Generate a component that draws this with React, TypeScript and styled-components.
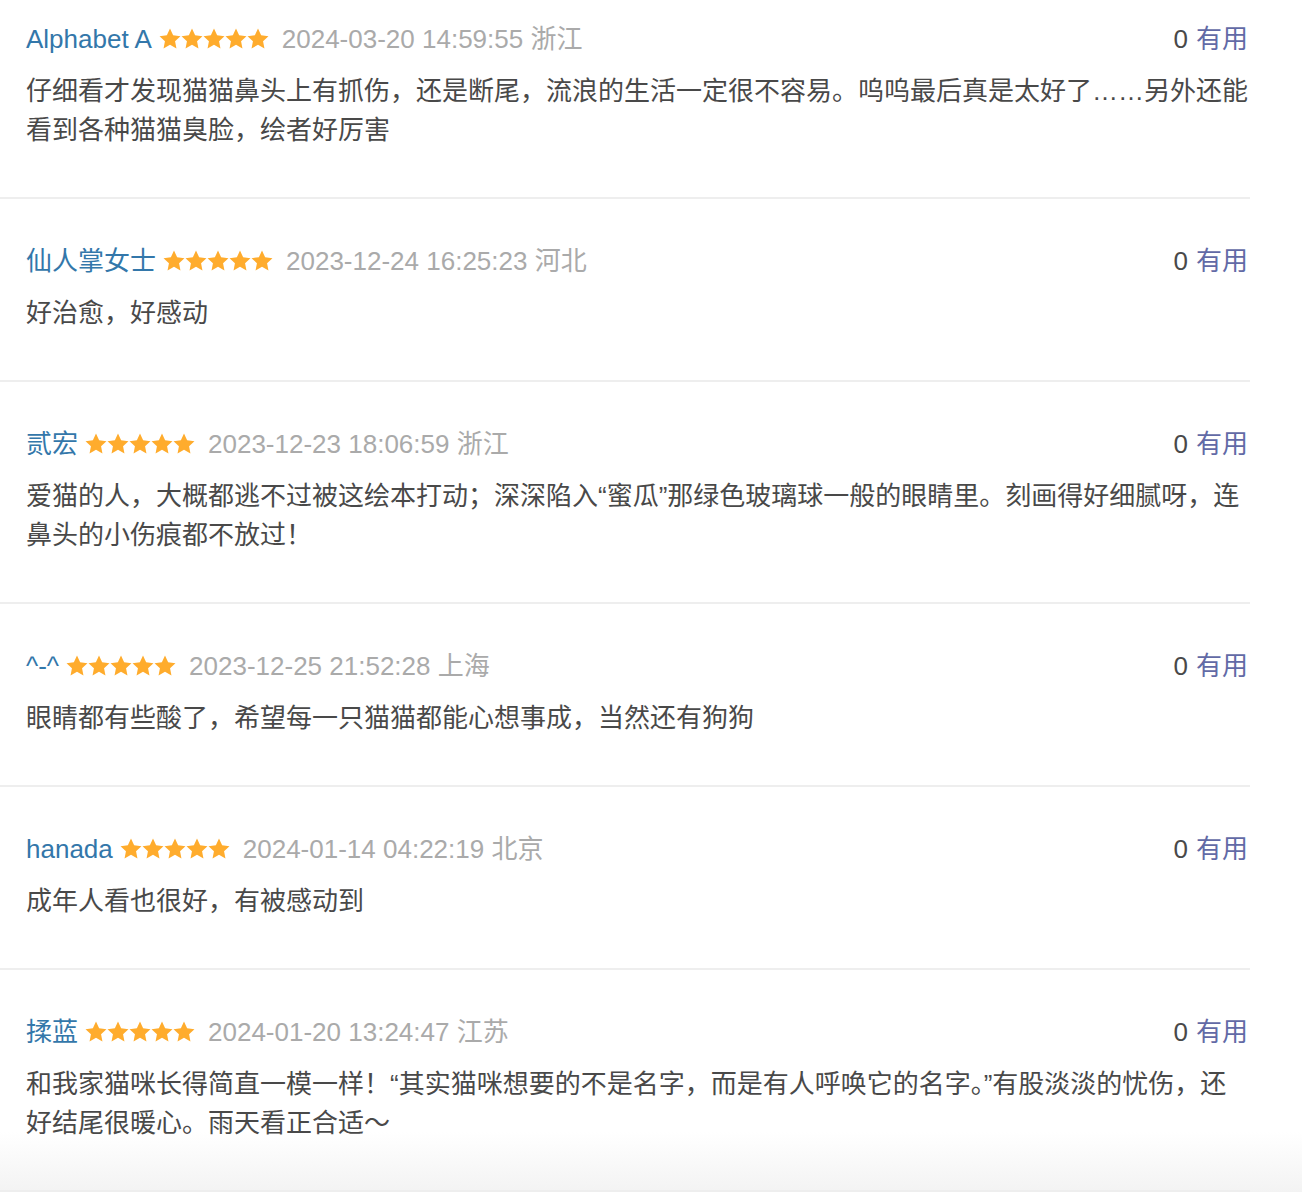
import React from "react";
import styled, { createGlobalStyle } from "styled-components";

const Global = createGlobalStyle`
  html, body { margin: 0; padding: 0; background: #fff; }
  body { font-family: "Liberation Sans", "Noto Sans CJK SC", sans-serif; }
`;

const Page = styled.div`
  position: relative;
  width: 1302px;
  height: 1192px;
  overflow: hidden;
`;

const List = styled.ul`
  position: relative;
  z-index: 1;
  list-style: none;
  margin: 0;
  padding: 0;
  width: 1250px;
`;

const Item = styled.li<{ $first?: boolean }>`
  padding: ${(p) => (p.$first ? "19px" : "42px")} 2px 47px 26px;
  border-bottom: 2px solid #eeeeee;
`;

const Header = styled.div`
  display: flex;
  align-items: center;
  height: 40px;
  font-size: 26px;
  line-height: 40px;
  white-space: nowrap;
`;

const Name = styled.a`
  color: #3377aa;
  text-decoration: none;
`;

const Stars = styled.span`
  display: inline-flex;
  margin-left: 7px;
  margin-right: 13px;
  margin-top: -1px;
`;

const Date = styled.span`
  color: #aaaaaa;
`;

const Spacer = styled.span`
  flex: 1;
`;

const Count = styled.span`
  color: #494949;
`;

const Useful = styled.a`
  color: #626aa6;
  margin-left: 8px;
  text-decoration: none;
`;

const Body = styled.p`
  margin: 13px 0 0;
  font-size: 26px;
  line-height: 39px;
  color: #494949;
`;

const Fade = styled.div`
  position: absolute;
  z-index: 0;
  left: 0;
  right: 0;
  bottom: 0;
  height: 60px;
  pointer-events: none;
  background: linear-gradient(to bottom, rgba(255, 255, 255, 0), rgba(240, 240, 240, 0.8));
`;

const Star = () => (
  <svg width="22" height="22" viewBox="0 0 24 24">
    <path
      d="M12 0.6L15.41 7.91L23.41 8.89L17.52 14.39L19.05 22.31L12 18.4L4.95 22.31L6.48 14.39L0.59 8.89L8.59 7.91Z"
      fill="#ffac2d"
    />
  </svg>
);

type Review = { name: string; date: string; text: string };

const reviews: Review[] = [
  {
    name: "Alphabet A",
    date: "2024-03-20 14:59:55 浙江",
    text: "仔细看才发现猫猫鼻头上有抓伤，还是断尾，流浪的生活一定很不容易。呜呜最后真是太好了……另外还能看到各种猫猫臭脸，绘者好厉害",
  },
  { name: "仙人掌女士", date: "2023-12-24 16:25:23 河北", text: "好治愈，好感动" },
  {
    name: "贰宏",
    date: "2023-12-23 18:06:59 浙江",
    text: "爱猫的人，大概都逃不过被这绘本打动；深深陷入“蜜瓜”那绿色玻璃球一般的眼睛里。刻画得好细腻呀，连鼻头的小伤痕都不放过！",
  },
  {
    name: "^-^",
    date: "2023-12-25 21:52:28 上海",
    text: "眼睛都有些酸了，希望每一只猫猫都能心想事成，当然还有狗狗",
  },
  { name: "hanada", date: "2024-01-14 04:22:19 北京", text: "成年人看也很好，有被感动到" },
  {
    name: "揉蓝",
    date: "2024-01-20 13:24:47 江苏",
    text: "和我家猫咪长得简直一模一样！“其实猫咪想要的不是名字，而是有人呼唤它的名字。”有股淡淡的忧伤，还好结尾很暖心。雨天看正合适～",
  },
];

export default function App() {
  return (
    <Page>
      <Global />
      <List>
        {reviews.map((r, i) => (
          <Item key={i} $first={i === 0}>
            <Header>
              <Name href="#">{r.name}</Name>
              <Stars>
                {[0, 1, 2, 3, 4].map((s) => (
                  <Star key={s} />
                ))}
              </Stars>
              <Date>{r.date}</Date>
              <Spacer />
              <Count>0</Count>
              <Useful href="#">有用</Useful>
            </Header>
            <Body>{r.text}</Body>
          </Item>
        ))}
      </List>
      <Fade />
    </Page>
  );
}
